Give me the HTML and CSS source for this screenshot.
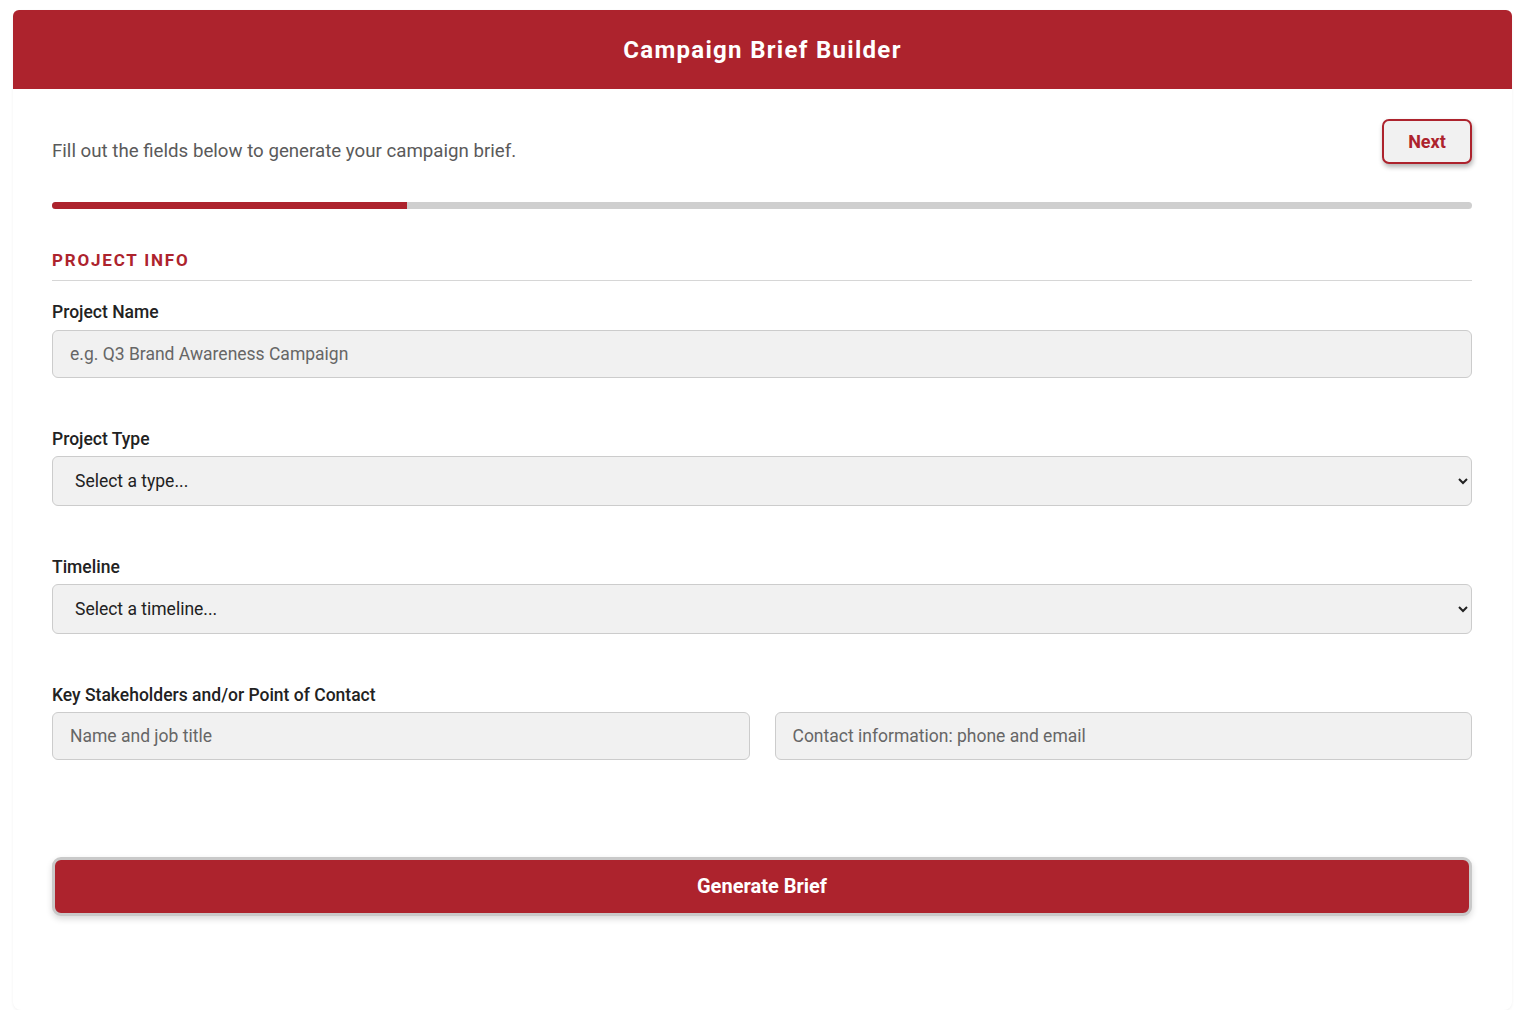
FILE: index.html
```html
<!DOCTYPE html>
<html lang="en">
<head>
  <meta charset="utf-8">
  <title>Campaign Brief Builder</title>
  <meta name="viewport" content="width=device-width, initial-scale=1">
  <link rel="stylesheet" href="styles.css">
</head>
<body>
  <div class="brief-card">
    <header class="brief-header">
      <h1>Campaign Brief Builder</h1>
    </header>

    <div class="brief-body">
      <div class="intro-row">
        <p class="intro">Fill out the fields below to generate your campaign brief.</p>
        <button class="next-btn" type="button">Next</button>
      </div>

      <div class="progress"><div class="progress-fill" style="width: 25%"></div></div>

      <h2 class="section-title">Project Info</h2>

      <div class="field">
        <label for="project-name">Project Name</label>
        <input id="project-name" type="text" placeholder="e.g. Q3 Brand Awareness Campaign">
      </div>

      <div class="field">
        <label for="project-type">Project Type</label>
        <select id="project-type">
          <option>Select a type...</option>
        </select>
      </div>

      <div class="field">
        <label for="timeline">Timeline</label>
        <select id="timeline">
          <option>Select a timeline...</option>
        </select>
      </div>

      <div class="field">
        <label for="contact-name">Key Stakeholders and/or Point of Contact</label>
        <div class="field-pair">
          <input id="contact-name" type="text" placeholder="Name and job title">
          <input type="text" placeholder="Contact information: phone and email">
        </div>
      </div>

      <button class="generate-btn" type="button">Generate Brief</button>
    </div>
  </div>
</body>
</html>
```

FILE: styles.css
```css
* { box-sizing: border-box; }

body {
  margin: 0;
  background: #fff;
  font-family: Roboto, "Liberation Sans", Arial, sans-serif;
  color: #222;
}

.brief-card {
  width: 1499px;
  margin: 10px 0 0 13px;
  height: 1000px;
  background: #fff;
  border-radius: 8px;
  box-shadow: 0 1px 3px rgba(0,0,0,0.06);
}

.brief-header {
  height: 79px;
  background: #ad232d;
  border-radius: 6px 6px 0 0;
  display: flex;
  align-items: center;
  justify-content: center;
}
.brief-header h1 {
  margin: 0;
  color: #fff;
  font-size: 24px;
  font-weight: 700;
  letter-spacing: 1.3px;
}

.brief-body {
  padding: 30px 40px 0 39px;
}

.intro-row {
  display: flex;
  justify-content: space-between;
  align-items: flex-start;
}
.intro {
  margin: 20px 0 0;
  font-size: 18.7px;
  line-height: 25px;
  color: #5a5a5a;
}

.next-btn {
  width: 90px;
  height: 45px;
  background: #f1f1f1;
  border: 2px solid #ad232d;
  border-radius: 7px;
  color: #ad232d;
  font-family: inherit;
  font-size: 18px;
  font-weight: 700;
  box-shadow: 1px 3px 5px rgba(0,0,0,0.3);
}

.progress {
  margin-top: 38px;
  height: 7px;
  background: #cfcfcf;
  border-radius: 4px;
  overflow: hidden;
}
.progress-fill {
  height: 100%;
  background: #ad232d;
}

.section-title {
  margin: 41px 0 0;
  padding-bottom: 10px;
  border-bottom: 1px solid #d6d6d6;
  color: #ad232d;
  font-size: 17px;
  line-height: 20px;
  font-weight: 700;
  letter-spacing: 1.8px;
  text-transform: uppercase;
}

.field {
  margin-top: 21px;
}
.field + .field {
  margin-top: 51px;
}
.field label {
  display: block;
  margin-bottom: 7px;
  font-size: 17.5px;
  line-height: 20px;
  font-weight: 500;
  color: #222;
}
.section-title + .field label {
  margin-bottom: 8px;
}

.field input,
.field select {
  display: block;
  width: 100%;
  height: 48px;
  padding: 0 17px;
  background: #f1f1f1;
  border: 1px solid #ccc;
  border-radius: 6px;
  font-family: inherit;
  font-size: 17.5px;
  color: #222;
}
.field select {
  height: 50px;
  padding: 0 18px;
}
.field input::placeholder {
  color: #666;
}

.field-pair {
  display: flex;
  gap: 25px;
}

.generate-btn {
  display: block;
  width: 100%;
  height: 59px;
  margin-top: 96.5px;
  background: #ad232d;
  border: 3px solid #c9c9c9;
  border-radius: 9px;
  color: #fff;
  font-family: inherit;
  font-size: 20px;
  font-weight: 700;
  box-shadow: 0 3px 6px rgba(0,0,0,0.15);
}
```
